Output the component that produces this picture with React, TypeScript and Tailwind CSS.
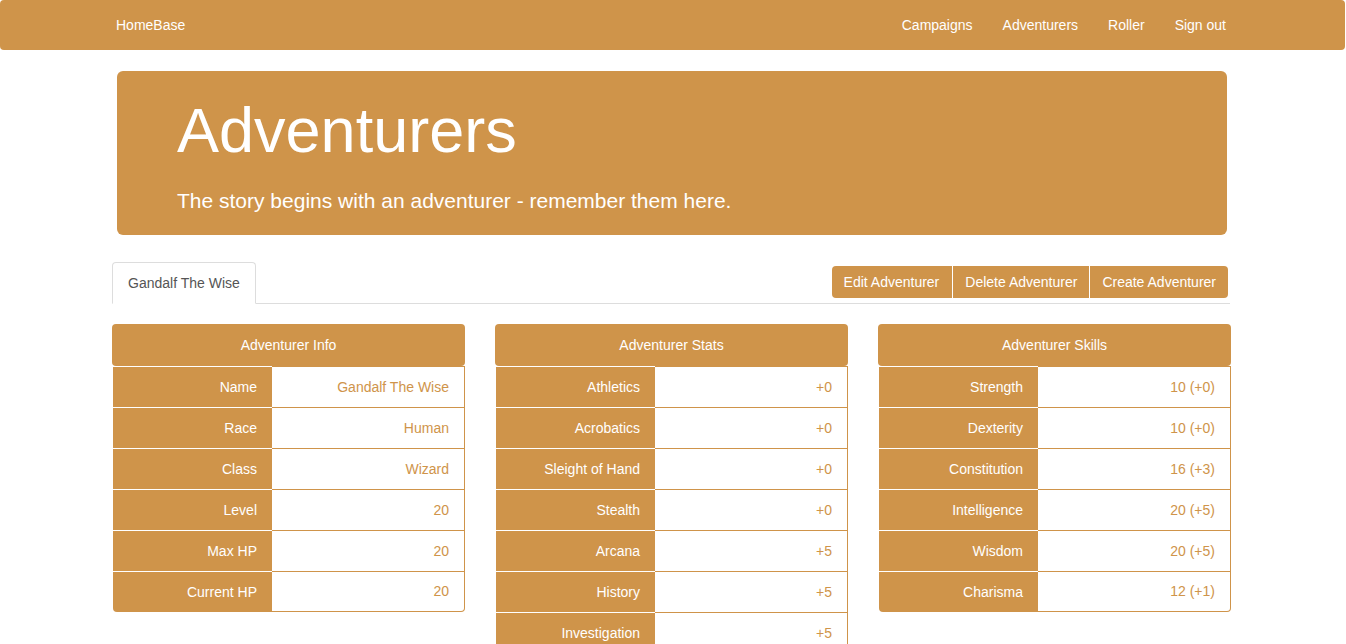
import React from "react";

type Row = [string, string];

const info: Row[] = [
  ["Name", "Gandalf The Wise"],
  ["Race", "Human"],
  ["Class", "Wizard"],
  ["Level", "20"],
  ["Max HP", "20"],
  ["Current HP", "20"],
];

const stats: Row[] = [
  ["Athletics", "+0"],
  ["Acrobatics", "+0"],
  ["Sleight of Hand", "+0"],
  ["Stealth", "+0"],
  ["Arcana", "+5"],
  ["History", "+5"],
  ["Investigation", "+5"],
  ["Nature", "+5"],
  ["Religion", "+5"],
  ["Animal Handling", "+5"],
  ["Insight", "+5"],
];

const skills: Row[] = [
  ["Strength", "10 (+0)"],
  ["Dexterity", "10 (+0)"],
  ["Constitution", "16 (+3)"],
  ["Intelligence", "20 (+5)"],
  ["Wisdom", "20 (+5)"],
  ["Charisma", "12 (+1)"],
];

const Panel = ({ title, rows }: { title: string; rows: Row[] }) => (
  <div>
    <div className="h-[42px] rounded-[4px] bg-[#cf944a] text-white text-[14px] flex items-center justify-center">
      {title}
    </div>
    <div className="ml-px">
      {rows.map(([label, value], i) => {
        const last = i === rows.length - 1;
        return (
          <div key={label} className="flex h-[41px]">
            <div
              className={`w-[159px] bg-[#cf944a] text-white border-t border-white flex items-center justify-end pr-[15px] ${
                last ? "rounded-bl-[4px]" : ""
              }`}
            >
              {label}
            </div>
            <div
              className={`flex-1 bg-white text-[#cf944a] border-t border-r border-[#cf944a] flex items-center justify-end pr-[15px] ${
                last ? "border-b rounded-br-[4px]" : ""
              }`}
            >
              {value}
            </div>
          </div>
        );
      })}
    </div>
  </div>
);

export default function App() {
  return (
    <div className="min-h-screen bg-white text-[14px] leading-[20px] font-['Liberation_Sans',Arial,sans-serif]">
      {/* navbar */}
      <nav className="h-[50px] mr-px bg-[#cf944a] rounded-[4px] text-white">
        <div className="ml-[116px] w-[1110px] h-full flex items-center justify-between">
          <span>HomeBase</span>
          <div className="flex gap-[30px]">
            <span>Campaigns</span>
            <span>Adventurers</span>
            <span>Roller</span>
            <span>Sign out</span>
          </div>
        </div>
      </nav>

      {/* jumbotron */}
      <div className="mt-[21px] ml-[117px] w-[1110px] rounded-[6px] bg-[#cf944a] text-white px-[60px] pt-[25px] pb-[19px]">
        <h1 className="text-[63px] leading-[1.1]">Adventurers</h1>
        <p className="mt-[21px] text-[21px] leading-[1.4]">
          The story begins with an adventurer - remember them here.
        </p>
      </div>

      {/* tabs + actions */}
      <div className="mt-[27px] ml-[112px] w-[1118px] flex items-end justify-between border-b border-[#ddd]">
        <div className="-mb-px h-[42px] px-[15px] border border-[#ddd] border-b-white rounded-t-[4px] bg-white text-[#555] flex items-center">
          Gandalf The Wise
        </div>
        <div className="flex mb-[5px] mr-[2px] h-[32px] rounded-[4px] overflow-hidden bg-[#cf944a] text-white">
          <span className="pl-[12px] pr-[13px] flex items-center">Edit Adventurer</span>
          <span className="px-[12px] flex items-center border-l border-white">Delete Adventurer</span>
          <span className="px-[12px] flex items-center border-l border-white">Create Adventurer</span>
        </div>
      </div>

      {/* panels */}
      <div className="mt-[20px] ml-[112px] w-[1119px] grid grid-cols-3 gap-[30px] items-start">
        <Panel title="Adventurer Info" rows={info} />
        <Panel title="Adventurer Stats" rows={stats} />
        <Panel title="Adventurer Skills" rows={skills} />
      </div>
    </div>
  );
}
